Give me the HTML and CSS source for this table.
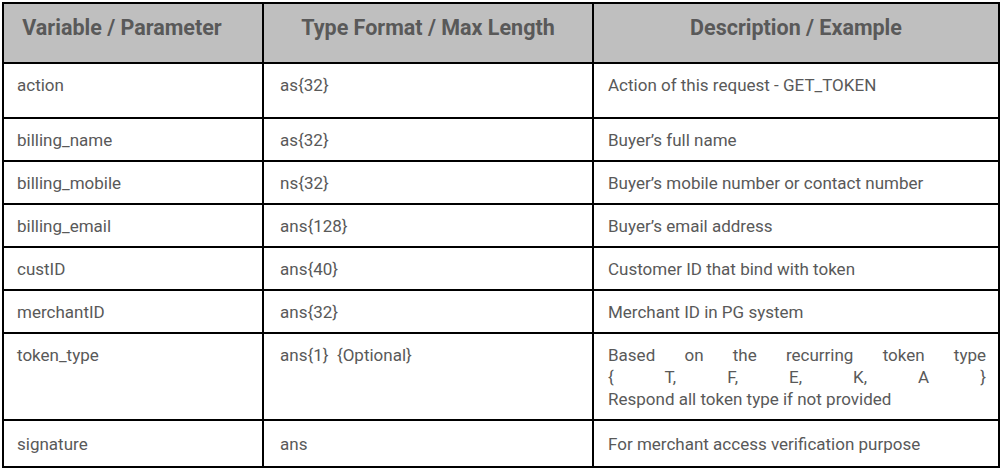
FILE: index.html
```html
<!DOCTYPE html>
<html>
<head>
<meta charset="utf-8">
<link rel="stylesheet" href="styles.css">
</head>
<body>
<table class="params">
  <colgroup>
    <col class="c1">
    <col class="c2">
    <col class="c3">
  </colgroup>
  <thead>
    <tr>
      <th class="h1">Variable / Parameter</th>
      <th>Type Format / Max Length</th>
      <th>Description / Example</th>
    </tr>
  </thead>
  <tbody>
    <tr class="tall">
      <td>action</td>
      <td>as{32}</td>
      <td>Action of this request - GET_TOKEN</td>
    </tr>
    <tr>
      <td>billing_name</td>
      <td>as{32}</td>
      <td>Buyer’s full name</td>
    </tr>
    <tr>
      <td>billing_mobile</td>
      <td>ns{32}</td>
      <td>Buyer’s mobile number or contact number</td>
    </tr>
    <tr>
      <td>billing_email</td>
      <td>ans{128}</td>
      <td>Buyer’s email address</td>
    </tr>
    <tr>
      <td>custID</td>
      <td>ans{40}</td>
      <td>Customer ID that bind with token</td>
    </tr>
    <tr>
      <td>merchantID</td>
      <td>ans{32}</td>
      <td>Merchant ID in PG system</td>
    </tr>
    <tr>
      <td>token_type</td>
      <td>ans{1}&nbsp; {Optional}</td>
      <td>
        <span class="jline">Based on the recurring token type</span>
        <span class="jline">{ T, F, E, K, A }</span>
        <span class="line">Respond all token type if not provided</span>
      </td>
    </tr>
    <tr class="last">
      <td>signature</td>
      <td>ans</td>
      <td>For merchant access verification purpose</td>
    </tr>
  </tbody>
</table>
</body>
</html>
```

FILE: styles.css
```css
html, body {
  margin: 0;
  padding: 0;
  background: #ffffff;
}

body {
  padding: 2px;
  font-family: Roboto, "Liberation Sans", sans-serif;
  color: #595959;
}

.params {
  width: 998px;
  table-layout: fixed;
  border-collapse: separate;
  border-spacing: 0;
  border-top: 2px solid #000;
  border-left: 2px solid #000;
}

.c1 { width: 260px; }
.c2 { width: 330px; }
.c3 { width: 406px; }

.params th,
.params td {
  border-right: 2px solid #000;
  border-bottom: 2px solid #000;
  vertical-align: top;
  text-align: left;
}

.params th {
  background: #bfbfbf;
  height: 46px;
  padding: 11px 12px 1px;
  font-size: 21.5px;
  line-height: 26px;
  font-weight: 700;
  text-align: center;
  color: #595959;
}

.params th.h1 {
  padding-right: 34px;
}

.params td {
  padding: 10px 12px 9px 13px;
  font-size: 17px;
  line-height: 22px;
  height: 22px;
}

.params td:nth-child(2) { padding-left: 16px; }
.params td:nth-child(3) { padding-left: 14px; }

.params tr.tall td {
  height: 34px;
}

.params tr.last td {
  padding-top: 12px;
  padding-bottom: 11px;
}

.jline {
  display: block;
  text-align: justify;
  text-align-last: justify;
}

.line {
  display: block;
}
```
